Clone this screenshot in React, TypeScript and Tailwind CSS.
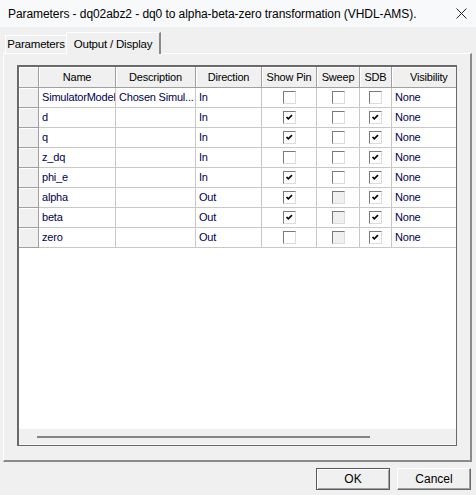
import type { ReactNode } from "react";

type Row = {
  name: string;
  desc: string;
  dir: string;
  pin: boolean;
  sweep: boolean | null;
  sdb: boolean;
};

const rows: Row[] = [
  { name: "SimulatorModel", desc: "Chosen Simul...", dir: "In", pin: false, sweep: false, sdb: false },
  { name: "d", desc: "", dir: "In", pin: true, sweep: false, sdb: true },
  { name: "q", desc: "", dir: "In", pin: true, sweep: false, sdb: true },
  { name: "z_dq", desc: "", dir: "In", pin: false, sweep: false, sdb: true },
  { name: "phi_e", desc: "", dir: "In", pin: true, sweep: false, sdb: true },
  { name: "alpha", desc: "", dir: "Out", pin: true, sweep: null, sdb: true },
  { name: "beta", desc: "", dir: "Out", pin: true, sweep: null, sdb: true },
  { name: "zero", desc: "", dir: "Out", pin: false, sweep: null, sdb: true },
];

function Check({ checked, disabled }: { checked: boolean; disabled?: boolean }) {
  return (
    <span
      className={`flex h-[13px] w-[13px] items-center justify-center border border-t-[#7a7a7a] border-l-[#7a7a7a] border-r-[#dcdcdc] border-b-[#dcdcdc] ${
        disabled ? "bg-[#f0f0f0]" : "bg-white"
      }`}
    >
      {checked && (
        <svg width="11" height="11" viewBox="0 0 11 11">
          <path d="M2.5 5 L4.3 6.8 L8 3.2" fill="none" stroke="#000" strokeWidth="1.7" />
        </svg>
      )}
    </span>
  );
}

function HeadCell({ w, children, left }: { w: string; children?: ReactNode; left?: boolean }) {
  return (
    <div
      className={`${w} flex h-[21px] shrink-0 items-center overflow-hidden whitespace-nowrap border-r border-b border-[#a0a0a0] bg-[#f0f0f0] shadow-[inset_1px_1px_0_#fff] ${
        left ? "pl-[18px]" : "justify-center"
      }`}
    >
      {children}
    </div>
  );
}

function Cell({ w, children, center }: { w: string; children?: ReactNode; center?: boolean }) {
  return (
    <div
      className={`${w} flex h-[20px] shrink-0 items-center overflow-hidden whitespace-nowrap border-r border-b border-[#c8c8c8] ${
        center ? "justify-center" : "pl-[3px]"
      }`}
    >
      {children}
    </div>
  );
}

export default function App() {
  return (
    <div className="flex h-[495px] w-[476px] flex-col bg-[#f0f0f0] font-['Liberation_Sans',Arial,sans-serif] text-[12px] text-black">
      {/* title bar */}
      <div className="flex h-[27px] shrink-0 items-center justify-between bg-[#f8f9fb] pl-[8px] pr-[8px] tracking-[-0.07px]">
        <span>Parameters - dq02abz2 - dq0 to alpha-beta-zero transformation (VHDL-AMS).</span>
        <svg width="11" height="11" viewBox="0 0 11 11" className="mr-[1px]">
          <path d="M0.5 0.5 L10.5 10.5 M10.5 0.5 L0.5 10.5" stroke="#222" strokeWidth="1" />
        </svg>
      </div>

      <div className="flex flex-col px-[3px]">
        {/* tabs */}
        <div className="flex h-[26px] items-end text-[11.5px] tracking-[-0.2px]">
          <div className="ml-[2px] flex h-[18px] w-[63px] items-center justify-center border-t border-l border-white border-r-[#a0a0a0] pr-[2px] shadow-[inset_-1px_0_0_#e3e3e3]">
            Parameters
          </div>
          <div className="relative z-10 -mb-[1px] -ml-[2px] flex h-[22px] w-[95px] items-start justify-center border-t border-l border-r-2 border-t-white border-l-white border-r-[#8a8a8a] bg-[#f0f0f0] pt-[3px]">
            Output / Display
          </div>
        </div>

        {/* panel */}
        <div className="h-[409px] w-[469px] border-t border-l border-white border-r-2 border-b-2 border-r-[#8a8a8a] border-b-[#8a8a8a] pt-[11px] pl-[13px]">
          <div className="flex h-[381px] w-[440px] flex-col border-t-2 border-l-2 border-r border-b border-[#6a6a6a] bg-white">
            <div className="flex-1 overflow-hidden text-[11px] tracking-[-0.2px] text-[#000050]">
              <div className="flex text-black">
                <HeadCell w="w-[20px]" />
                <HeadCell w="w-[77px]">Name</HeadCell>
                <HeadCell w="w-[80px]">Description</HeadCell>
                <HeadCell w="w-[66px]">Direction</HeadCell>
                <HeadCell w="w-[55px]">Show Pin</HeadCell>
                <HeadCell w="w-[43px]">Sweep</HeadCell>
                <HeadCell w="w-[32px]">SDB</HeadCell>
                <HeadCell w="w-[90px]" left>
                  Visibility
                </HeadCell>
              </div>
              {rows.map(r => (
                <div key={r.name} className="flex">
                  <div className="h-[20px] w-[20px] shrink-0 border-r border-b border-[#a0a0a0] bg-[#f0f0f0] shadow-[inset_1px_1px_0_#fff]" />
                  <Cell w="w-[77px]">{r.name}</Cell>
                  <Cell w="w-[80px]">{r.desc}</Cell>
                  <Cell w="w-[66px]">{r.dir}</Cell>
                  <Cell w="w-[55px]" center>
                    <Check checked={r.pin} />
                  </Cell>
                  <Cell w="w-[43px]" center>
                    <Check checked={false} disabled={r.sweep === null} />
                  </Cell>
                  <Cell w="w-[32px]" center>
                    <Check checked={r.sdb} />
                  </Cell>
                  <Cell w="w-[90px]">None</Cell>
                </div>
              ))}
            </div>
            {/* horizontal scrollbar */}
            <div className="h-[16px] shrink-0 border-b border-[#f8f8f8] bg-[#f0f0f0] pt-[7px] pl-[18px]">
              <div className="h-[2px] w-[333px] bg-[#858585]" />
            </div>
          </div>
        </div>
      </div>

      {/* buttons */}
      <div className="flex justify-end gap-[7px] pt-[6px] pr-[5px]">
        <button className="flex h-[22px] w-[74px] items-center justify-center border border-[#5a5a5a] bg-[#f0f0f0] shadow-[inset_1px_1px_0_#fff,inset_-1px_-1px_0_#a0a0a0]">
          OK
        </button>
        <button className="flex h-[22px] w-[74px] items-center justify-center border border-t-white border-l-white border-r-[#696969] border-b-[#696969] bg-[#f0f0f0] shadow-[inset_-1px_-1px_0_#a0a0a0]">
          Cancel
        </button>
      </div>
    </div>
  );
}
